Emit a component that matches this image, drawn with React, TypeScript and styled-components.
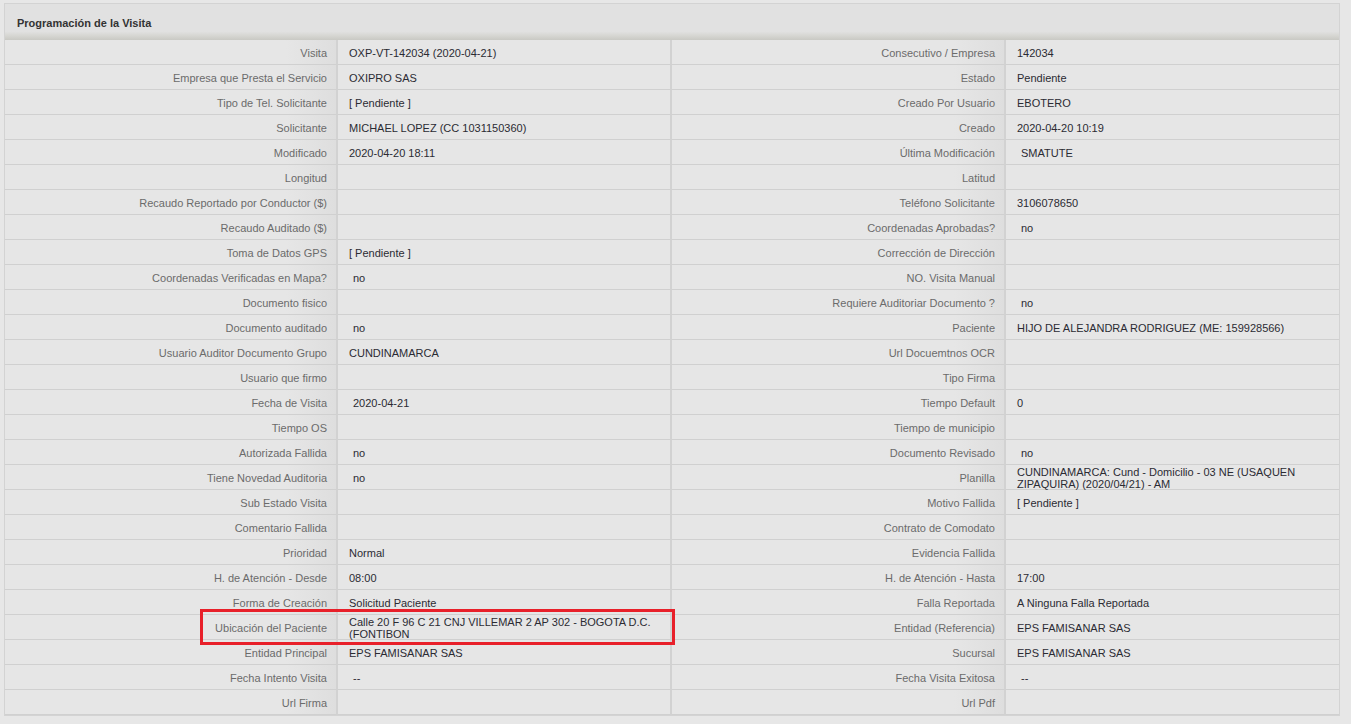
import React from "react";
import styled, { createGlobalStyle } from "styled-components";

const Global = createGlobalStyle`
  html, body { margin: 0; padding: 0; background: #e7e7e7; }
  body { font-family: "Liberation Sans", Arial, sans-serif; font-size: 11px; }
`;

const Page = styled.div`
  padding: 3px 11px 8px 4px;
`;

const Panel = styled.section`
  position: relative;
  border: 1px solid #d3d3d3;
  background: #e6e6e6;
`;

const Header = styled.div`
  height: 36px;
  display: flex;
  align-items: center;
  padding-left: 12px;
  padding-top: 1px;
  box-sizing: border-box;
  font-weight: bold;
  font-size: 11px;
  color: #333;
  background: linear-gradient(to bottom, #e1e1e1 0%, #e1e1e1 76%, #d6d6d2 88%, #c9c9c4 100%);
`;

const Grid = styled.div`
  display: grid;
  grid-template-columns: 333px 334px 334px 1fr;
  grid-auto-rows: 25px;
`;

const Label = styled.div`
  display: flex;
  align-items: center;
  justify-content: flex-end;
  text-align: right;
  padding: 1px 9px 0 0;
  color: #6b6b6b;
  line-height: 12px;
  border-bottom: 1px solid #d0d0d0;
  border-right: 2px solid #d2d2d2;
  background: linear-gradient(to right, #e6e6e6 0%, #e6e6e6 85%, #dedede 100%);
`;

const Value = styled.div<{ $indent?: boolean; $last?: boolean }>`
  display: flex;
  align-items: center;
  padding: 1px 10px 0 ${(p) => (p.$indent ? "15px" : "11px")};
  color: #2b2b33;
  line-height: 12px;
  border-bottom: 1px solid #d0d0d0;
  border-right: ${(p) => (p.$last ? "0" : "2px solid #d2d2d2")};
  background: #e6e6e6;
`;

const Highlight = styled.div`
  position: absolute;
  left: 195px;
  top: 605px;
  width: 469px;
  height: 30px;
  border: 3px solid #e8202a;
  pointer-events: none;
`;

type Cell = { l: string; v: string; i?: boolean };

const rows: [Cell, Cell][] = [
  [{ l: "Visita", v: "OXP-VT-142034 (2020-04-21)" }, { l: "Consecutivo / Empresa", v: "142034" }],
  [{ l: "Empresa que Presta el Servicio", v: "OXIPRO SAS" }, { l: "Estado", v: "Pendiente" }],
  [{ l: "Tipo de Tel. Solicitante", v: "[ Pendiente ]" }, { l: "Creado Por Usuario", v: "EBOTERO" }],
  [{ l: "Solicitante", v: "MICHAEL LOPEZ (CC 1031150360)" }, { l: "Creado", v: "2020-04-20 10:19" }],
  [{ l: "Modificado", v: "2020-04-20 18:11" }, { l: "Última Modificación", v: "SMATUTE", i: true }],
  [{ l: "Longitud", v: "" }, { l: "Latitud", v: "" }],
  [{ l: "Recaudo Reportado por Conductor ($)", v: "" }, { l: "Teléfono Solicitante", v: "3106078650" }],
  [{ l: "Recaudo Auditado ($)", v: "" }, { l: "Coordenadas Aprobadas?", v: "no", i: true }],
  [{ l: "Toma de Datos GPS", v: "[ Pendiente ]" }, { l: "Corrección de Dirección", v: "" }],
  [{ l: "Coordenadas Verificadas en Mapa?", v: "no", i: true }, { l: "NO. Visita Manual", v: "" }],
  [{ l: "Documento fisico", v: "" }, { l: "Requiere Auditoriar Documento ?", v: "no", i: true }],
  [{ l: "Documento auditado", v: "no", i: true }, { l: "Paciente", v: "HIJO DE ALEJANDRA RODRIGUEZ (ME: 159928566)" }],
  [{ l: "Usuario Auditor Documento Grupo", v: "CUNDINAMARCA" }, { l: "Url Docuemtnos OCR", v: "" }],
  [{ l: "Usuario que firmo", v: "" }, { l: "Tipo Firma", v: "" }],
  [{ l: "Fecha de Visita", v: "2020-04-21", i: true }, { l: "Tiempo Default", v: "0" }],
  [{ l: "Tiempo OS", v: "" }, { l: "Tiempo de municipio", v: "" }],
  [{ l: "Autorizada Fallida", v: "no", i: true }, { l: "Documento Revisado", v: "no", i: true }],
  [
    { l: "Tiene Novedad Auditoria", v: "no", i: true },
    { l: "Planilla", v: "CUNDINAMARCA: Cund - Domicilio - 03 NE (USAQUEN ZIPAQUIRA) (2020/04/21) - AM" },
  ],
  [{ l: "Sub Estado Visita", v: "" }, { l: "Motivo Fallida", v: "[ Pendiente ]" }],
  [{ l: "Comentario Fallida", v: "" }, { l: "Contrato de Comodato", v: "" }],
  [{ l: "Prioridad", v: "Normal" }, { l: "Evidencia Fallida", v: "" }],
  [{ l: "H. de Atención - Desde", v: "08:00" }, { l: "H. de Atención - Hasta", v: "17:00" }],
  [{ l: "Forma de Creación", v: "Solicitud Paciente" }, { l: "Falla Reportada", v: "A Ninguna Falla Reportada" }],
  [
    { l: "Ubicación del Paciente", v: "Calle 20 F 96 C 21 CNJ VILLEMAR 2 AP 302 - BOGOTA D.C. (FONTIBON" },
    { l: "Entidad (Referencia)", v: "EPS FAMISANAR SAS" },
  ],
  [{ l: "Entidad Principal", v: "EPS FAMISANAR SAS" }, { l: "Sucursal", v: "EPS FAMISANAR SAS" }],
  [{ l: "Fecha Intento Visita", v: "--", i: true }, { l: "Fecha Visita Exitosa", v: "--", i: true }],
  [{ l: "Url Firma", v: "" }, { l: "Url Pdf", v: "" }],
];

export default function App() {
  return (
    <>
      <Global />
      <Page>
        <Panel>
          <Header>Programación de la Visita</Header>
          <Grid>
            {rows.map(([a, b], idx) => (
              <React.Fragment key={idx}>
                <Label>{a.l}</Label>
                <Value $indent={a.i}>{a.v}</Value>
                <Label>{b.l}</Label>
                <Value $indent={b.i} $last>{b.v}</Value>
              </React.Fragment>
            ))}
          </Grid>
          <Highlight />
        </Panel>
      </Page>
    </>
  );
}
